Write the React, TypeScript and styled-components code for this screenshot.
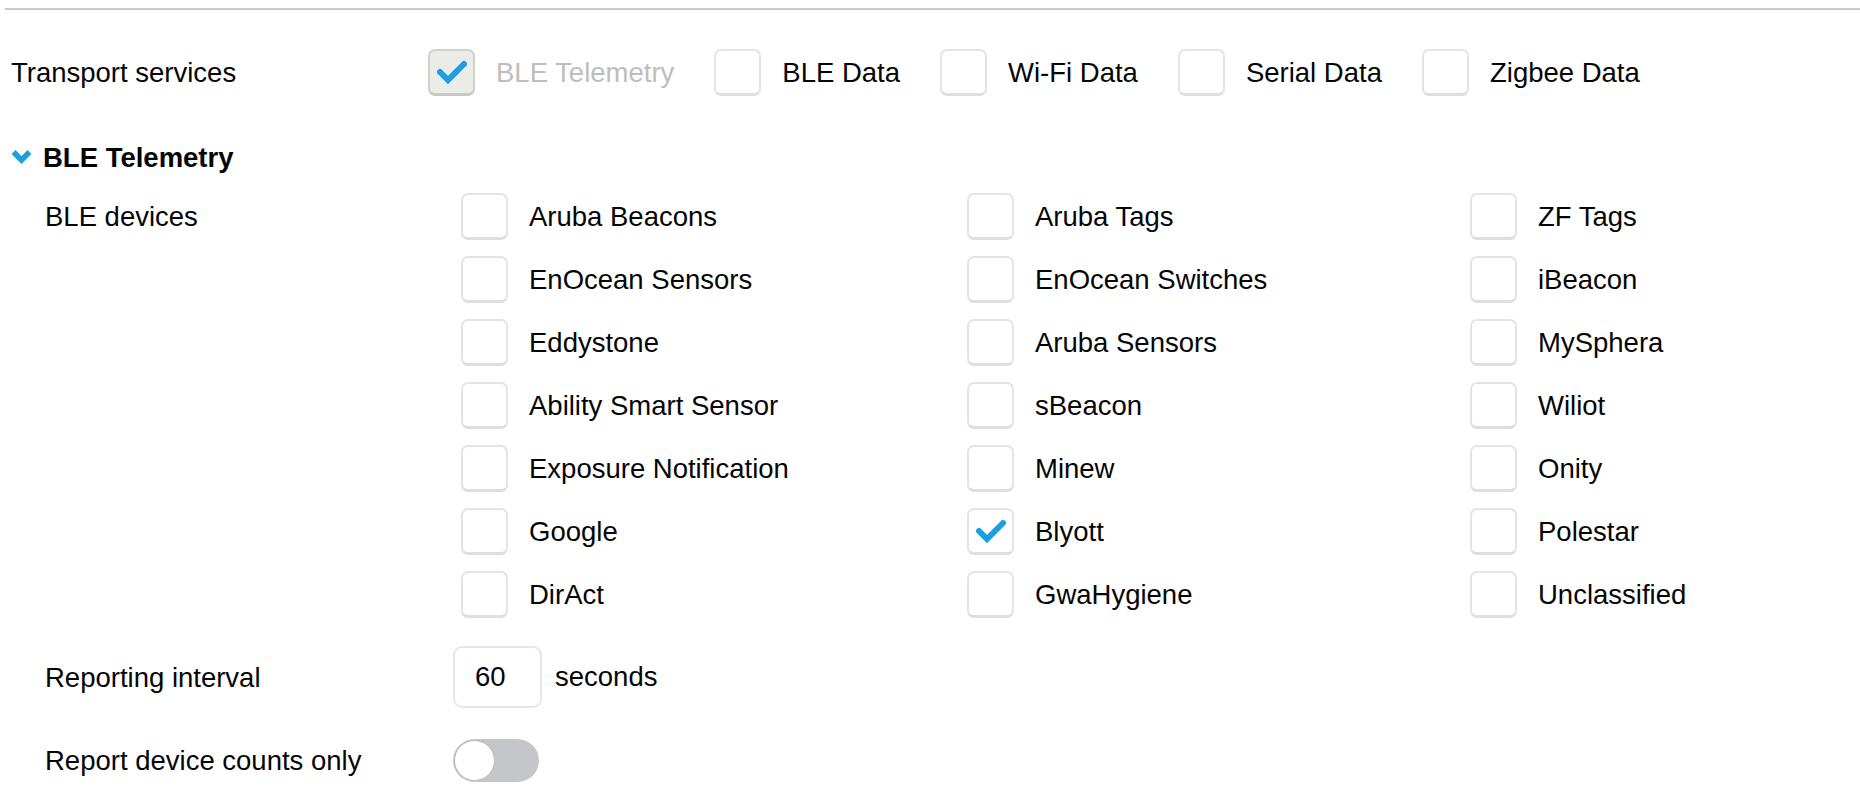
import React from "react";
import styled, { createGlobalStyle } from "styled-components";

const GlobalStyle = createGlobalStyle`
  html, body { margin: 0; padding: 0; background: #ffffff; overflow: hidden; }
  body {
    font-family: "Liberation Sans", Arial, Helvetica, sans-serif;
    color: #050505;
  }
`;

const Page = styled.div`
  padding: 8px 0 0 5px;
  font-size: 27.5px;
  box-sizing: border-box;
`;

const Divider = styled.div`
  height: 2px;
  background: #cacaca;
`;

const Content = styled.div`
  padding-left: 6px;
`;

const TransportRow = styled.div`
  display: flex;
  align-items: center;
  height: 47px;
  margin-top: 39px;
`;

const RowLabel = styled.div<{ $width: number }>`
  width: ${(p) => p.$width}px;
  flex-shrink: 0;
  line-height: 47px;
  white-space: nowrap;
`;

const InlineOptions = styled.div`
  display: flex;
  align-items: center;
  gap: 40px;
`;

const Option = styled.label`
  display: flex;
  align-items: center;
  gap: 21px;
  white-space: nowrap;
`;

const Box = styled.span<{ $checked?: boolean; $disabled?: boolean }>`
  width: 47px;
  height: 47px;
  box-sizing: border-box;
  border-radius: 7px;
  border: 2px solid ${(p) => (p.$disabled ? "#cfcfcc" : "#e4e4e4")};
  border-bottom-width: 3px;
  border-bottom-color: ${(p) => (p.$disabled ? "#c8c8c5" : "#dedede")};
  background: ${(p) => (p.$disabled ? "#ebebe8" : "#ffffff")};
  display: flex;
  align-items: center;
  justify-content: center;
  flex-shrink: 0;
`;

const OptionText = styled.span<{ $disabled?: boolean }>`
  color: ${(p) => (p.$disabled ? "#bdbdbd" : "#050505")};
`;

const SectionHeader = styled.div`
  display: flex;
  align-items: center;
  gap: 11px;
  height: 32px;
  margin-top: 46px;
  font-weight: 700;
`;

const ChevronWrap = styled.span`
  display: flex;
  margin-top: -4px;
`;

const SectionBody = styled.div`
  padding-left: 34px;
`;

const DevicesRow = styled.div`
  display: flex;
  align-items: flex-start;
  margin-top: 19px;
`;

const DeviceGrid = styled.div`
  display: grid;
  grid-template-columns: 506px 503px 1fr;
  row-gap: 16px;
  flex: 1;
`;

const FieldRow = styled.div<{ $top: number; $height: number }>`
  display: flex;
  align-items: center;
  height: ${(p) => p.$height}px;
  margin-top: ${(p) => p.$top}px;
`;

const NumberBox = styled.div`
  width: 89px;
  height: 62px;
  box-sizing: border-box;
  border: 2px solid #e6e6e6;
  border-radius: 9px;
  padding-left: 20px;
  display: flex;
  align-items: center;
`;

const Unit = styled.span`
  margin-left: 13px;
`;

const Toggle = styled.div`
  width: 86px;
  height: 43px;
  border-radius: 22px;
  background: #c5c6c9;
  display: flex;
  align-items: center;
`;

const Knob = styled.span`
  width: 41px;
  height: 41px;
  box-sizing: border-box;
  border-radius: 50%;
  background: #ffffff;
  border: 1px solid #b9b9b9;
  margin-left: 1px;
`;

const Check = () => (
  <svg width="30" height="24" viewBox="0 0 30 24" aria-hidden>
    <path
      d="M3 12 L11 20 L27 4"
      fill="none"
      stroke="#1b9fe0"
      strokeWidth="6"
      strokeLinecap="round"
      strokeLinejoin="miter"
    />
  </svg>
);

const Chevron = () => (
  <svg width="21" height="15" viewBox="0 0 21 15" aria-hidden>
    <path d="M2.5 3 L10.5 11 L18.5 3" fill="none" stroke="#1b9fe0" strokeWidth="5.5" strokeLinecap="butt" />
  </svg>
);

type Item = { label: string; checked?: boolean; disabled?: boolean };

const transports: Item[] = [
  { label: "BLE Telemetry", checked: true, disabled: true },
  { label: "BLE Data" },
  { label: "Wi-Fi Data" },
  { label: "Serial Data" },
  { label: "Zigbee Data" },
];

const devices: Item[] = [
  { label: "Aruba Beacons" },
  { label: "Aruba Tags" },
  { label: "ZF Tags" },
  { label: "EnOcean Sensors" },
  { label: "EnOcean Switches" },
  { label: "iBeacon" },
  { label: "Eddystone" },
  { label: "Aruba Sensors" },
  { label: "MySphera" },
  { label: "Ability Smart Sensor" },
  { label: "sBeacon" },
  { label: "Wiliot" },
  { label: "Exposure Notification" },
  { label: "Minew" },
  { label: "Onity" },
  { label: "Google" },
  { label: "Blyott", checked: true },
  { label: "Polestar" },
  { label: "DirAct" },
  { label: "GwaHygiene" },
  { label: "Unclassified" },
];

const CheckOption = ({ item }: { item: Item }) => (
  <Option>
    <Box $checked={item.checked} $disabled={item.disabled}>
      {item.checked && <Check />}
    </Box>
    <OptionText $disabled={item.disabled}>{item.label}</OptionText>
  </Option>
);

export default function App() {
  return (
    <>
      <GlobalStyle />
      <Page>
        <Divider />
        <Content>
          <TransportRow>
            <RowLabel $width={417}>Transport services</RowLabel>
            <InlineOptions>
              {transports.map((t) => (
                <CheckOption key={t.label} item={t} />
              ))}
            </InlineOptions>
          </TransportRow>

          <SectionHeader>
            <ChevronWrap>
              <Chevron />
            </ChevronWrap>
            <span>BLE Telemetry</span>
          </SectionHeader>

          <SectionBody>
            <DevicesRow>
              <RowLabel $width={416}>BLE devices</RowLabel>
              <DeviceGrid>
                {devices.map((d) => (
                  <CheckOption key={d.label} item={d} />
                ))}
              </DeviceGrid>
            </DevicesRow>

            <FieldRow $top={28} $height={62}>
              <RowLabel $width={408}>Reporting interval</RowLabel>
              <NumberBox>60</NumberBox>
              <Unit>seconds</Unit>
            </FieldRow>

            <FieldRow $top={31} $height={43}>
              <RowLabel $width={408}>Report device counts only</RowLabel>
              <Toggle>
                <Knob />
              </Toggle>
            </FieldRow>
          </SectionBody>
        </Content>
      </Page>
    </>
  );
}
